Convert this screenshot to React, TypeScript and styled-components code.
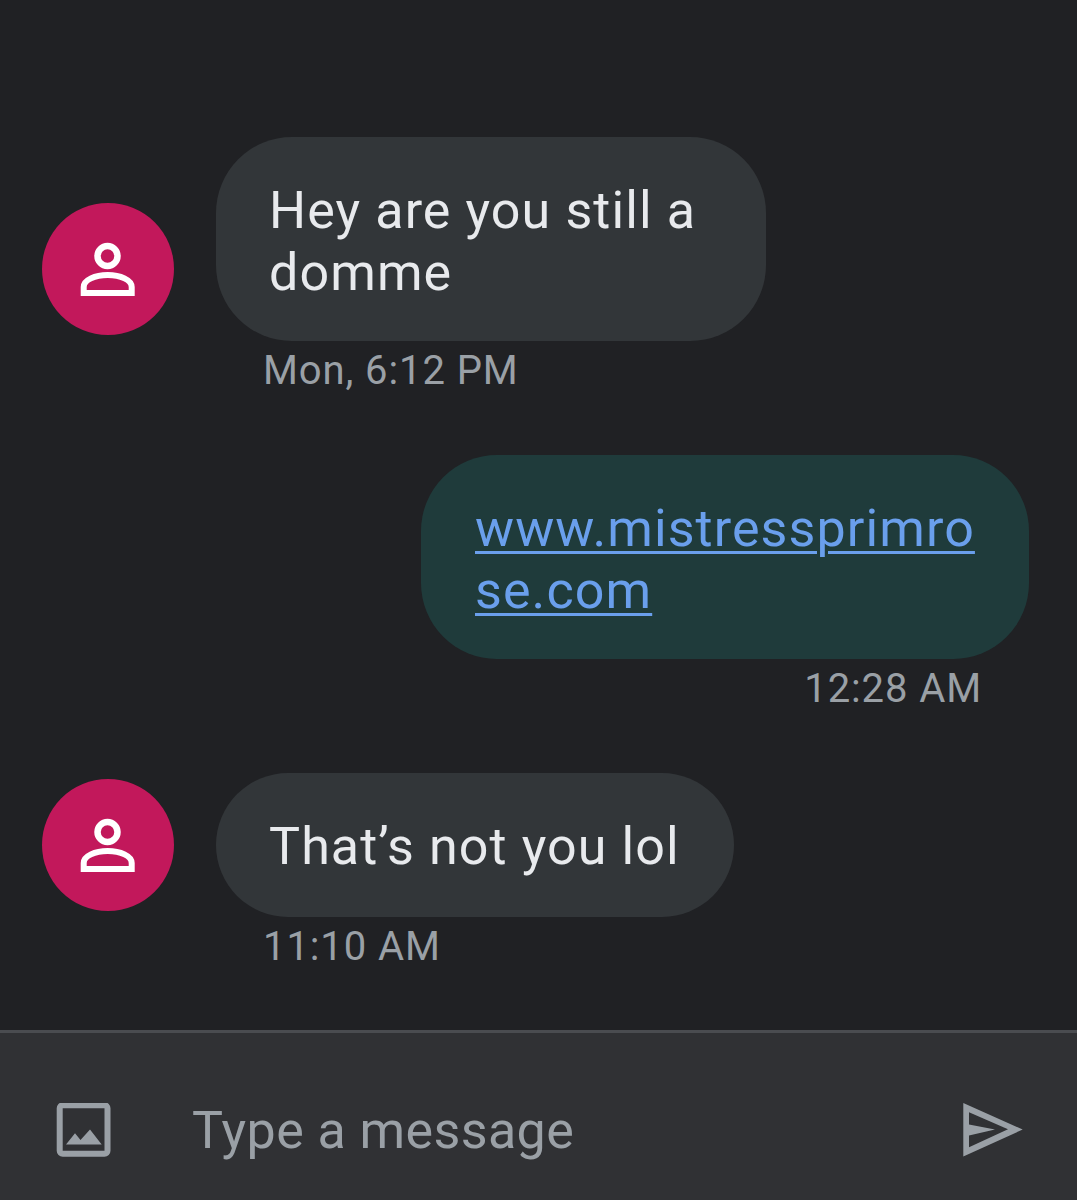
import React from "react";
import styled, { createGlobalStyle } from "styled-components";

const Global = createGlobalStyle`
  html, body { margin: 0; padding: 0; background: #202124; }
  * { box-sizing: border-box; }
`;

const Screen = styled.div`
  width: 1077px;
  height: 1200px;
  background: #202124;
  font-family: Roboto, "Liberation Sans", sans-serif;
  display: flex;
  flex-direction: column;
  overflow: hidden;
`;

const Thread = styled.div`
  height: 1030px;
  padding: 137px 48px 0 42px;
  display: flex;
  flex-direction: column;
`;

const Message = styled.div<{ $out?: boolean; $gap?: number }>`
  display: flex;
  flex-direction: column;
  align-items: ${(p) => (p.$out ? "flex-end" : "flex-start")};
  margin-bottom: ${(p) => p.$gap ?? 0}px;
`;

const Row = styled.div`
  display: flex;
  align-items: flex-end;
  gap: 42px;
`;

const Avatar = styled.div`
  width: 132px;
  height: 132px;
  border-radius: 50%;
  background: #c2185b;
  display: flex;
  align-items: center;
  justify-content: center;
  margin-bottom: 6px;
  flex: none;
`;

const Bubble = styled.div<{ $out?: boolean; $width: number; $single?: boolean }>`
  width: ${(p) => p.$width}px;
  padding: 43px 54px ${(p) => (p.$single ? 39.5 : 38)}px ${(p) => (p.$out ? 54 : 53)}px;
  border-radius: 76px;
  background: ${(p) => (p.$out ? "#1f3b3b" : "#323639")};
  color: #e8eaed;
  font-size: 52px;
  line-height: 61.5px;
  letter-spacing: 1.1px;
  white-space: ${(p) => (p.$single ? "nowrap" : "normal")};
  overflow-wrap: anywhere;
`;

const LinkText = styled.a`
  color: #6a9fec;
  text-decoration: underline;
  text-decoration-thickness: 3px;
  text-underline-offset: 5px;
`;

const Stamp = styled.div<{ $out?: boolean }>`
  color: #9aa0a6;
  font-size: 40px;
  line-height: 44px;
  letter-spacing: 0.9px;
  margin-top: 8px;
  margin-left: ${(p) => (p.$out ? 0 : 221)}px;
  margin-right: ${(p) => (p.$out ? 47 : 0)}px;
`;

const Composer = styled.div`
  height: 170px;
  background: #303134;
  border-top: 3px solid #4a4c50;
  display: flex;
  align-items: center;
  padding: 28px 54px 0 56px;
`;

const Placeholder = styled.div`
  flex: 1;
  margin-left: 80px;
  color: #9aa0a6;
  font-size: 52px;
  letter-spacing: 0.4px;
`;

const Person = () => (
  <svg width="56" height="56" viewBox="0 0 56 56" fill="none" stroke="#fff" strokeWidth="6">
    <circle cx="27.5" cy="15" r="10" strokeWidth="6.5" />
    <path d="M3.7 52V46C3.7 39 15 34 27.7 34S51.7 39 51.7 46V52Z" />
  </svg>
);

const ImageIcon = () => (
  <svg width="56" height="56" viewBox="0 0 56 56" fill="none">
    <rect x="3.7" y="2.2" width="47.8" height="48.6" rx="3" stroke="#9aa0a6" strokeWidth="6" />
    <path d="M10 41.5L19 30.2L24.5 37L34 26.5L45.7 41.5Z" fill="#9aa0a6" />
  </svg>
);

const SendIcon = () => (
  <svg width="62" height="56" viewBox="0 0 62 56" fill="#9aa0a6">
    <path
      fillRule="evenodd"
      d="M2.3 0L61.7 26.5L2.3 53.5ZM8 9.2L47 26.2L8 44.2V32.5L34 26.5L8 21.5Z"
    />
  </svg>
);

export default function App() {
  return (
    <Screen>
      <Global />
      <Thread>
        <Message $gap={62}>
          <Row>
            <Avatar><Person /></Avatar>
            <Bubble $width={550}>Hey are you still a domme</Bubble>
          </Row>
          <Stamp>Mon, 6:12 PM</Stamp>
        </Message>
        <Message $out $gap={62}>
          <Bubble $out $width={608}>
            <LinkText>www.mistressprimrose.com</LinkText>
          </Bubble>
          <Stamp $out>12:28 AM</Stamp>
        </Message>
        <Message>
          <Row>
            <Avatar><Person /></Avatar>
            <Bubble $width={518} $single>That’s not you lol</Bubble>
          </Row>
          <Stamp>11:10 AM</Stamp>
        </Message>
      </Thread>
      <Composer>
        <ImageIcon />
        <Placeholder>Type a message</Placeholder>
        <SendIcon />
      </Composer>
    </Screen>
  );
}
